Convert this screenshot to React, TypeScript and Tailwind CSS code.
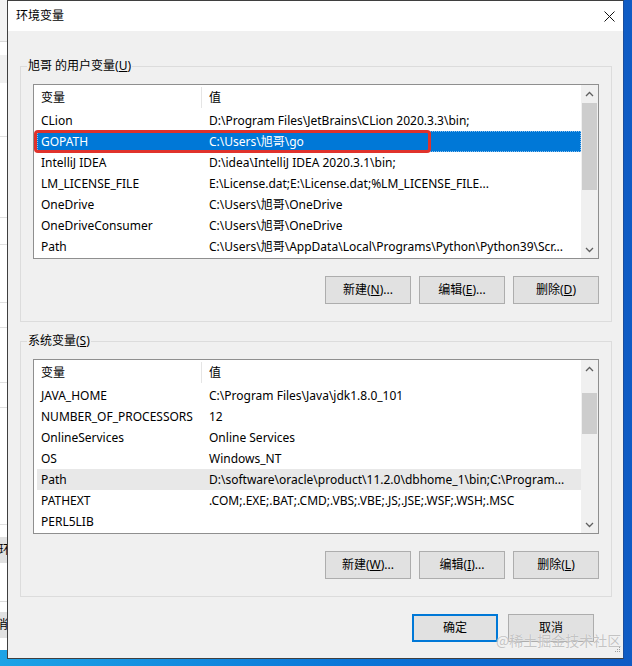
import React from "react";

type RowData = { name: string; value: string; state?: "selected" | "inactive" };

const userRows: RowData[] = [
  { name: "CLion", value: "D:\\Program Files\\JetBrains\\CLion 2020.3.3\\bin;" },
  { name: "GOPATH", value: "C:\\Users\\旭哥\\go", state: "selected" },
  { name: "IntelliJ IDEA", value: "D:\\idea\\IntelliJ IDEA 2020.3.1\\bin;" },
  { name: "LM_LICENSE_FILE", value: "E:\\License.dat;E:\\License.dat;%LM_LICENSE_FILE..." },
  { name: "OneDrive", value: "C:\\Users\\旭哥\\OneDrive" },
  { name: "OneDriveConsumer", value: "C:\\Users\\旭哥\\OneDrive" },
  { name: "Path", value: "C:\\Users\\旭哥\\AppData\\Local\\Programs\\Python\\Python39\\Scr..." },
];

const sysRows: RowData[] = [
  { name: "JAVA_HOME", value: "C:\\Program Files\\Java\\jdk1.8.0_101" },
  { name: "NUMBER_OF_PROCESSORS", value: "12" },
  { name: "OnlineServices", value: "Online Services" },
  { name: "OS", value: "Windows_NT" },
  { name: "Path", value: "D:\\software\\oracle\\product\\11.2.0\\dbhome_1\\bin;C:\\Program...", state: "inactive" },
  { name: "PATHEXT", value: ".COM;.EXE;.BAT;.CMD;.VBS;.VBE;.JS;.JSE;.WSF;.WSH;.MSC" },
  { name: "PERL5LIB", value: "" },
];

function Chevron({ up }: { up?: boolean }) {
  return (
    <svg width="9" height="6" viewBox="0 0 9 6">
      <polyline
        points={up ? "1,5 4.5,1.5 8,5" : "1,1 4.5,4.5 8,1"}
        fill="none"
        stroke="#606060"
        strokeWidth="1.3"
      />
    </svg>
  );
}

function Scrollbar({ thumbTop, thumbHeight }: { thumbTop: number; thumbHeight: number }) {
  return (
    <div className="flex w-[17px] shrink-0 flex-col items-center bg-[#f0f0f0]">
      <div className="flex h-[17px] w-full items-center justify-center">
        <Chevron up />
      </div>
      <div className="flex w-full flex-1 flex-col items-center">
        <div className="w-[15px] bg-[#cdcdcd]" style={{ marginTop: thumbTop, height: thumbHeight }} />
      </div>
      <div className="flex h-[17px] w-full items-center justify-center">
        <Chevron />
      </div>
    </div>
  );
}

function Row({ row }: { row: RowData }) {
  const sel = row.state === "selected";
  const inactive = row.state === "inactive";
  return (
    <div
      className={
        "flex h-[21px] items-center leading-[21px] " +
        (sel
          ? "bg-[#0078d7] text-white outline-1 outline-dotted outline-[#8cc0ef] -outline-offset-1"
          : inactive
          ? "bg-[#e8e8e8] text-black"
          : "text-black")
      }
    >
      <div className="w-[165px] shrink-0 overflow-hidden whitespace-nowrap pl-[4px]">{row.name}</div>
      <div className="min-w-0 flex-1 overflow-hidden whitespace-nowrap pl-[7px]">{row.value}</div>
    </div>
  );
}

function ListView({
  rows,
  thumbTop,
  thumbHeight,
  marked,
}: {
  rows: RowData[];
  thumbTop: number;
  thumbHeight: number;
  marked?: boolean;
}) {
  return (
    <div className="flex h-[175px] border border-[#8f8f8f] bg-white">
      <div className="relative flex min-w-0 flex-1 flex-col pl-[3px]">
        <div className="flex h-[25px] items-center">
          <div className="flex h-[21px] w-[165px] shrink-0 items-center border-r border-[#e5e5e5] pl-[4px]">变量</div>
          <div className="pl-[7px]">值</div>
        </div>
        {rows.map((r) => (
          <Row key={r.name + r.value} row={r} />
        ))}
        {marked && (
          <div className="pointer-events-none absolute left-0 top-[45px] h-[23px] w-[397px] rounded-[4px] border-[3px] border-[#e0322b]" />
        )}
      </div>
      <Scrollbar thumbTop={thumbTop} thumbHeight={thumbHeight} />
    </div>
  );
}

function Btn({ children, def }: { children: React.ReactNode; def?: boolean }) {
  return (
    <div
      className={
        "flex h-[28px] w-[86px] items-center justify-center bg-[#e1e1e1] text-[12px] text-black " +
        (def ? "border-2 border-[#0078d7]" : "border border-[#adadad]")
      }
    >
      {children}
    </div>
  );
}

function Group({
  label,
  children,
}: {
  label: React.ReactNode;
  children: React.ReactNode;
}) {
  return (
    <fieldset className="mx-[12px] mr-[11px] border border-[#dcdcdc] px-[12px] pb-[17px] pt-[10px]">
      <legend className="ml-[-6px] px-[1px] text-[12px] leading-[16px]">{label}</legend>
      {children}
    </fieldset>
  );
}

function LeftStrip() {
  const seg = [
    { h: 42, c: "bg-[#f3f3f3] border-b border-[#dadada]" },
    { h: 13, c: "bg-white" },
    { h: 28, c: "bg-[#f0f0f0]" },
    { h: 54, c: "bg-white border-b border-[#e0e0e0]" },
    { h: 81, c: "bg-white border-b border-[#e0e0e0]" },
    { h: 27, c: "bg-white border-b border-[#e0e0e0]" },
    { h: 58, c: "bg-white border-b border-[#e0e0e0]" },
    { h: 25, c: "bg-white border-b border-[#e0e0e0]" },
    { h: 55, c: "bg-white border-b border-[#e0e0e0]" },
    { h: 25, c: "bg-white border-b border-[#e0e0e0]" },
    { h: 117, c: "bg-white border-b border-[#e0e0e0]" },
    { h: 12, c: "bg-white" },
  ];
  return (
    <div className="flex h-[650px] w-[7px] shrink-0 flex-col overflow-hidden text-[12px] text-black">
      {seg.map((s, i) => (
        <div key={i} className={s.c + " shrink-0"} style={{ height: s.h }} />
      ))}
      <div className="flex h-[26px] shrink-0 items-center overflow-hidden whitespace-nowrap bg-[#e1e1e1]">
        <span className="ml-[-1px]">环境</span>
      </div>
      <div className="h-[39px] shrink-0 border-b border-[#dcdcdc] bg-white" />
      <div className="h-[10px] shrink-0 bg-white" />
      <div className="flex h-[26px] shrink-0 items-center overflow-hidden whitespace-nowrap bg-[#e1e1e1]">
        <span className="ml-[-4px]">消</span>
      </div>
      <div className="h-[12px] shrink-0 bg-white" />
    </div>
  );
}

export default function App() {
  return (
    <div className="relative flex h-[666px] w-[632px] items-start overflow-hidden bg-[linear-gradient(90deg,#1ea3e6,#0b76d8_55%,#0f5bc4)] font-['Noto_Sans','Noto_Sans_CJK_SC',sans-serif] text-[12px] text-black">
      <LeftStrip />
      <div className="flex h-[659px] w-[617px] shrink-0 flex-col border border-[#3f3f3f] border-r-[#1b4e9c] bg-[#f0f0f0]">
        <div className="flex h-[30px] shrink-0 items-center justify-between bg-white pl-[8px] pr-[8px]">
          <span className="text-[12px]">环境变量</span>
          <svg width="11" height="11" viewBox="0 0 11 11">
            <path d="M0.5 0.5 L10.5 10.5 M10.5 0.5 L0.5 10.5" stroke="#111" strokeWidth="1" />
          </svg>
        </div>
        <div className="flex flex-1 flex-col pt-[27px]">
          <Group label={<>旭哥 的用户变量(<u>U</u>)</>}>
            <ListView rows={userRows} thumbTop={1} thumbHeight={87} marked />
            <div className="mt-[17px] flex justify-end gap-[8px]">
              <Btn>新建(<u>N</u>)...</Btn>
              <Btn>编辑(<u>E</u>)...</Btn>
              <Btn>删除(<u>D</u>)</Btn>
            </div>
          </Group>
          <div className="h-[11px]" />
          <Group label={<>系统变量(<u>S</u>)</>}>
            <ListView rows={sysRows} thumbTop={16} thumbHeight={41} />
            <div className="mt-[17px] flex justify-end gap-[8px]">
              <Btn>新建(<u>W</u>)...</Btn>
              <Btn>编辑(<u>I</u>)...</Btn>
              <Btn>删除(<u>L</u>)</Btn>
            </div>
          </Group>
          <div className="mr-[29px] mt-[17px] flex justify-end gap-[10px]">
            <Btn def>确定</Btn>
            <Btn>取消</Btn>
          </div>
        </div>
      </div>
      <div className="pointer-events-none absolute left-[496px] top-[630px] whitespace-nowrap font-['Noto_Sans_CJK_SC',sans-serif] text-[14px] leading-[20px] text-[#b4b4b4]/80 [text-shadow:0_0_1px_#fff]">
        @稀土掘金技术社区
      </div>
      <div className="pointer-events-none absolute left-[615px] top-[647px] grid grid-cols-3 gap-[1px]">
        <span className="h-[1px] w-[1px]" />
        <span className="h-[1px] w-[1px]" />
        <span className="h-[1px] w-[1px] bg-[#a0a0a0]" />
        <span className="h-[1px] w-[1px]" />
        <span className="h-[1px] w-[1px] bg-[#a0a0a0]" />
        <span className="h-[1px] w-[1px] bg-[#a0a0a0]" />
        <span className="h-[1px] w-[1px] bg-[#a0a0a0]" />
        <span className="h-[1px] w-[1px] bg-[#a0a0a0]" />
        <span className="h-[1px] w-[1px] bg-[#a0a0a0]" />
      </div>
    </div>
  );
}
